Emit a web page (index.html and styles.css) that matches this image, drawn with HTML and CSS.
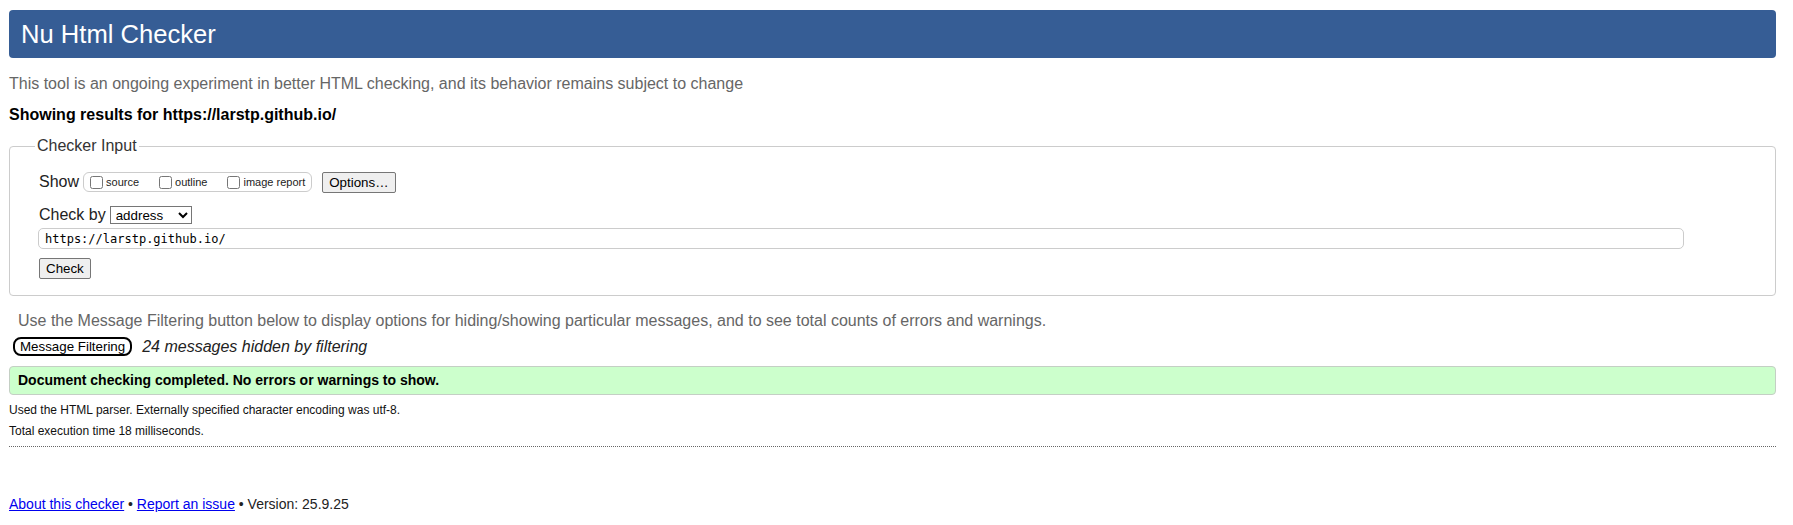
FILE: index.html
```html
<!DOCTYPE html>
<html lang="en">
<head>
<meta charset="utf-8">
<title>Showing results for https://larstp.github.io/ - Nu Html Checker</title>
<link rel="stylesheet" href="styles.css">
</head>
<body>
<h1 class="title">Nu Html Checker</h1>
<p class="intro">This tool is an ongoing experiment in better HTML checking, and its behavior remains subject to change</p>
<p class="showing">Showing results for https://larstp.github.io/</p>
<form class="checker-form">
  <fieldset class="input-box">
    <legend class="legend">Checker Input</legend>
    <div class="row show-row">
      <span class="row-label">Show</span>
      <span class="opts">
        <label class="opt"><input type="checkbox" class="cb">source</label>
        <label class="opt"><input type="checkbox" class="cb">outline</label>
        <label class="opt"><input type="checkbox" class="cb">image report</label>
      </span>
      <button type="button" class="btn">Options…</button>
    </div>
    <div class="row by-row">
      <span class="row-label">Check by</span>
      <select class="sel"><option>address</option></select>
    </div>
    <div class="url-row"><input type="text" class="url" value="https://larstp.github.io/"></div>
    <div class="submit-row"><button type="button" class="btn">Check</button></div>
  </fieldset>
</form>
<p class="hint">Use the Message Filtering button below to display options for hiding/showing particular messages, and to see total counts of errors and warnings.</p>
<div class="filter-row">
  <button type="button" class="mf-btn">Message Filtering</button>
  <span class="hidden-count">24 messages hidden by filtering</span>
</div>
<div class="success">Document checking completed. No errors or warnings to show.</div>
<p class="small">Used the HTML parser. Externally specified character encoding was utf-8.</p>
<p class="small">Total execution time 18 milliseconds.</p>
<hr class="sep">
<p class="footer"><a href="#" class="link">About this checker</a> • <a href="#" class="link">Report an issue</a> • Version: 25.9.25</p>
</body>
</html>
```
FILE: styles.css
```css
html, body {
  margin: 0;
  padding: 0;
  background: #fff;
}
body {
  font-family: "Liberation Sans", Arial, sans-serif;
  font-size: 16px;
  color: #000;
  padding: 10px 17px 0 9px;
}
.title {
  margin: 0;
  height: 48px;
  line-height: 48px;
  padding: 0 12px;
  background: #365d95;
  color: #fff;
  font-weight: normal;
  font-size: 25.6px;
  border-radius: 4px;
}
.intro {
  margin: 16px 0 0 0;
  line-height: 19px;
  color: #666;
}
.showing {
  margin: 12px 0 0 0;
  line-height: 19px;
  font-weight: bold;
}
.checker-form {
  margin: 13px 0 0 0;
}
.input-box {
  margin: 0;
  border: 1px solid #ccc;
  border-radius: 4px;
  padding: 16px 25px 16px 25px;
}
.legend {
  padding: 0 2px;
  color: #333;
  font-size: 16px;
}
.row {
  display: flex;
  align-items: center;
  margin-left: 4px;
}
.show-row {
  height: 22px;
}
.by-row {
  margin-top: 11px;
  height: 22px;
}
.row-label {
  color: #222;
  margin-right: 4px;
}
.opts {
  display: inline-flex;
  align-items: center;
  border: 1px solid #ccc;
  border-radius: 6px;
  height: 18px;
  padding: 0 6px 0 4px;
  margin-right: 10px;
}
.opt {
  display: inline-flex;
  align-items: center;
  font-size: 11px;
  color: #222;
  margin-right: 18px;
}
.opt:last-child {
  margin-right: 0;
}
.cb {
  margin: 0 3px 0 2px;
  width: 13px;
  height: 13px;
}
.btn {
  font-family: "Liberation Sans", Arial, sans-serif;
  font-size: 13.333px;
  color: #000;
  padding: 1px 6px;
  background: #efefef;
  border: 1px solid #767676;
  border-radius: 2px;
  height: 21px;
  line-height: 17px;
}
.sel {
  font-family: "Liberation Sans", Arial, sans-serif;
  font-size: 13.333px;
  width: 82px;
  height: 18px;
  padding: 0 0 0 1px;
  border: 1px solid #767676;
  border-radius: 0;
  background: #fff;
  color: #000;
}
.url-row {
  margin-top: 2px;
  margin-left: 3px;
}
.url {
  box-sizing: border-box;
  width: 1646px;
  height: 21px;
  border: 1px solid #ccc;
  border-radius: 5px;
  padding: 0 6px;
  font-family: "DejaVu Sans Mono", "Liberation Mono", monospace;
  font-size: 12px;
  color: #000;
}
.submit-row {
  margin-top: 9px;
  margin-left: 4px;
}
.hint {
  margin: 15px 0 0 9px;
  line-height: 19px;
  color: #666;
}
.filter-row {
  display: flex;
  align-items: center;
  margin-top: 7px;
  margin-left: 4px;
}
.mf-btn {
  font-family: "Liberation Sans", Arial, sans-serif;
  font-size: 13.333px;
  color: #000;
  background: #fff;
  border: 2px solid #000;
  border-radius: 8px;
  padding: 0 5px;
  height: 19px;
  line-height: 15px;
}
.hidden-count {
  font-style: italic;
  margin-left: 10px;
  color: #222;
}
.success {
  margin-top: 10px;
  background: #ccffcc;
  border: 1px solid #c4cfc4;
  border-radius: 4px;
  height: 27px;
  line-height: 27px;
  padding: 0 8px;
  font-size: 14px;
  font-weight: bold;
}
.small {
  margin: 0;
  font-size: 12px;
  line-height: 22px;
  color: #111;
}
.success + .small {
  margin-top: 4px;
}
.small + .small {
  margin-top: -1px;
}
.sep {
  margin: 4px 0 0 0;
  border: 0;
  border-top: 1px dotted #666;
  height: 0;
}
.footer {
  margin: 49px 0 0 0;
  font-size: 14px;
  line-height: 16px;
  color: #222;
}
.link {
  color: #0000ee;
}
```
